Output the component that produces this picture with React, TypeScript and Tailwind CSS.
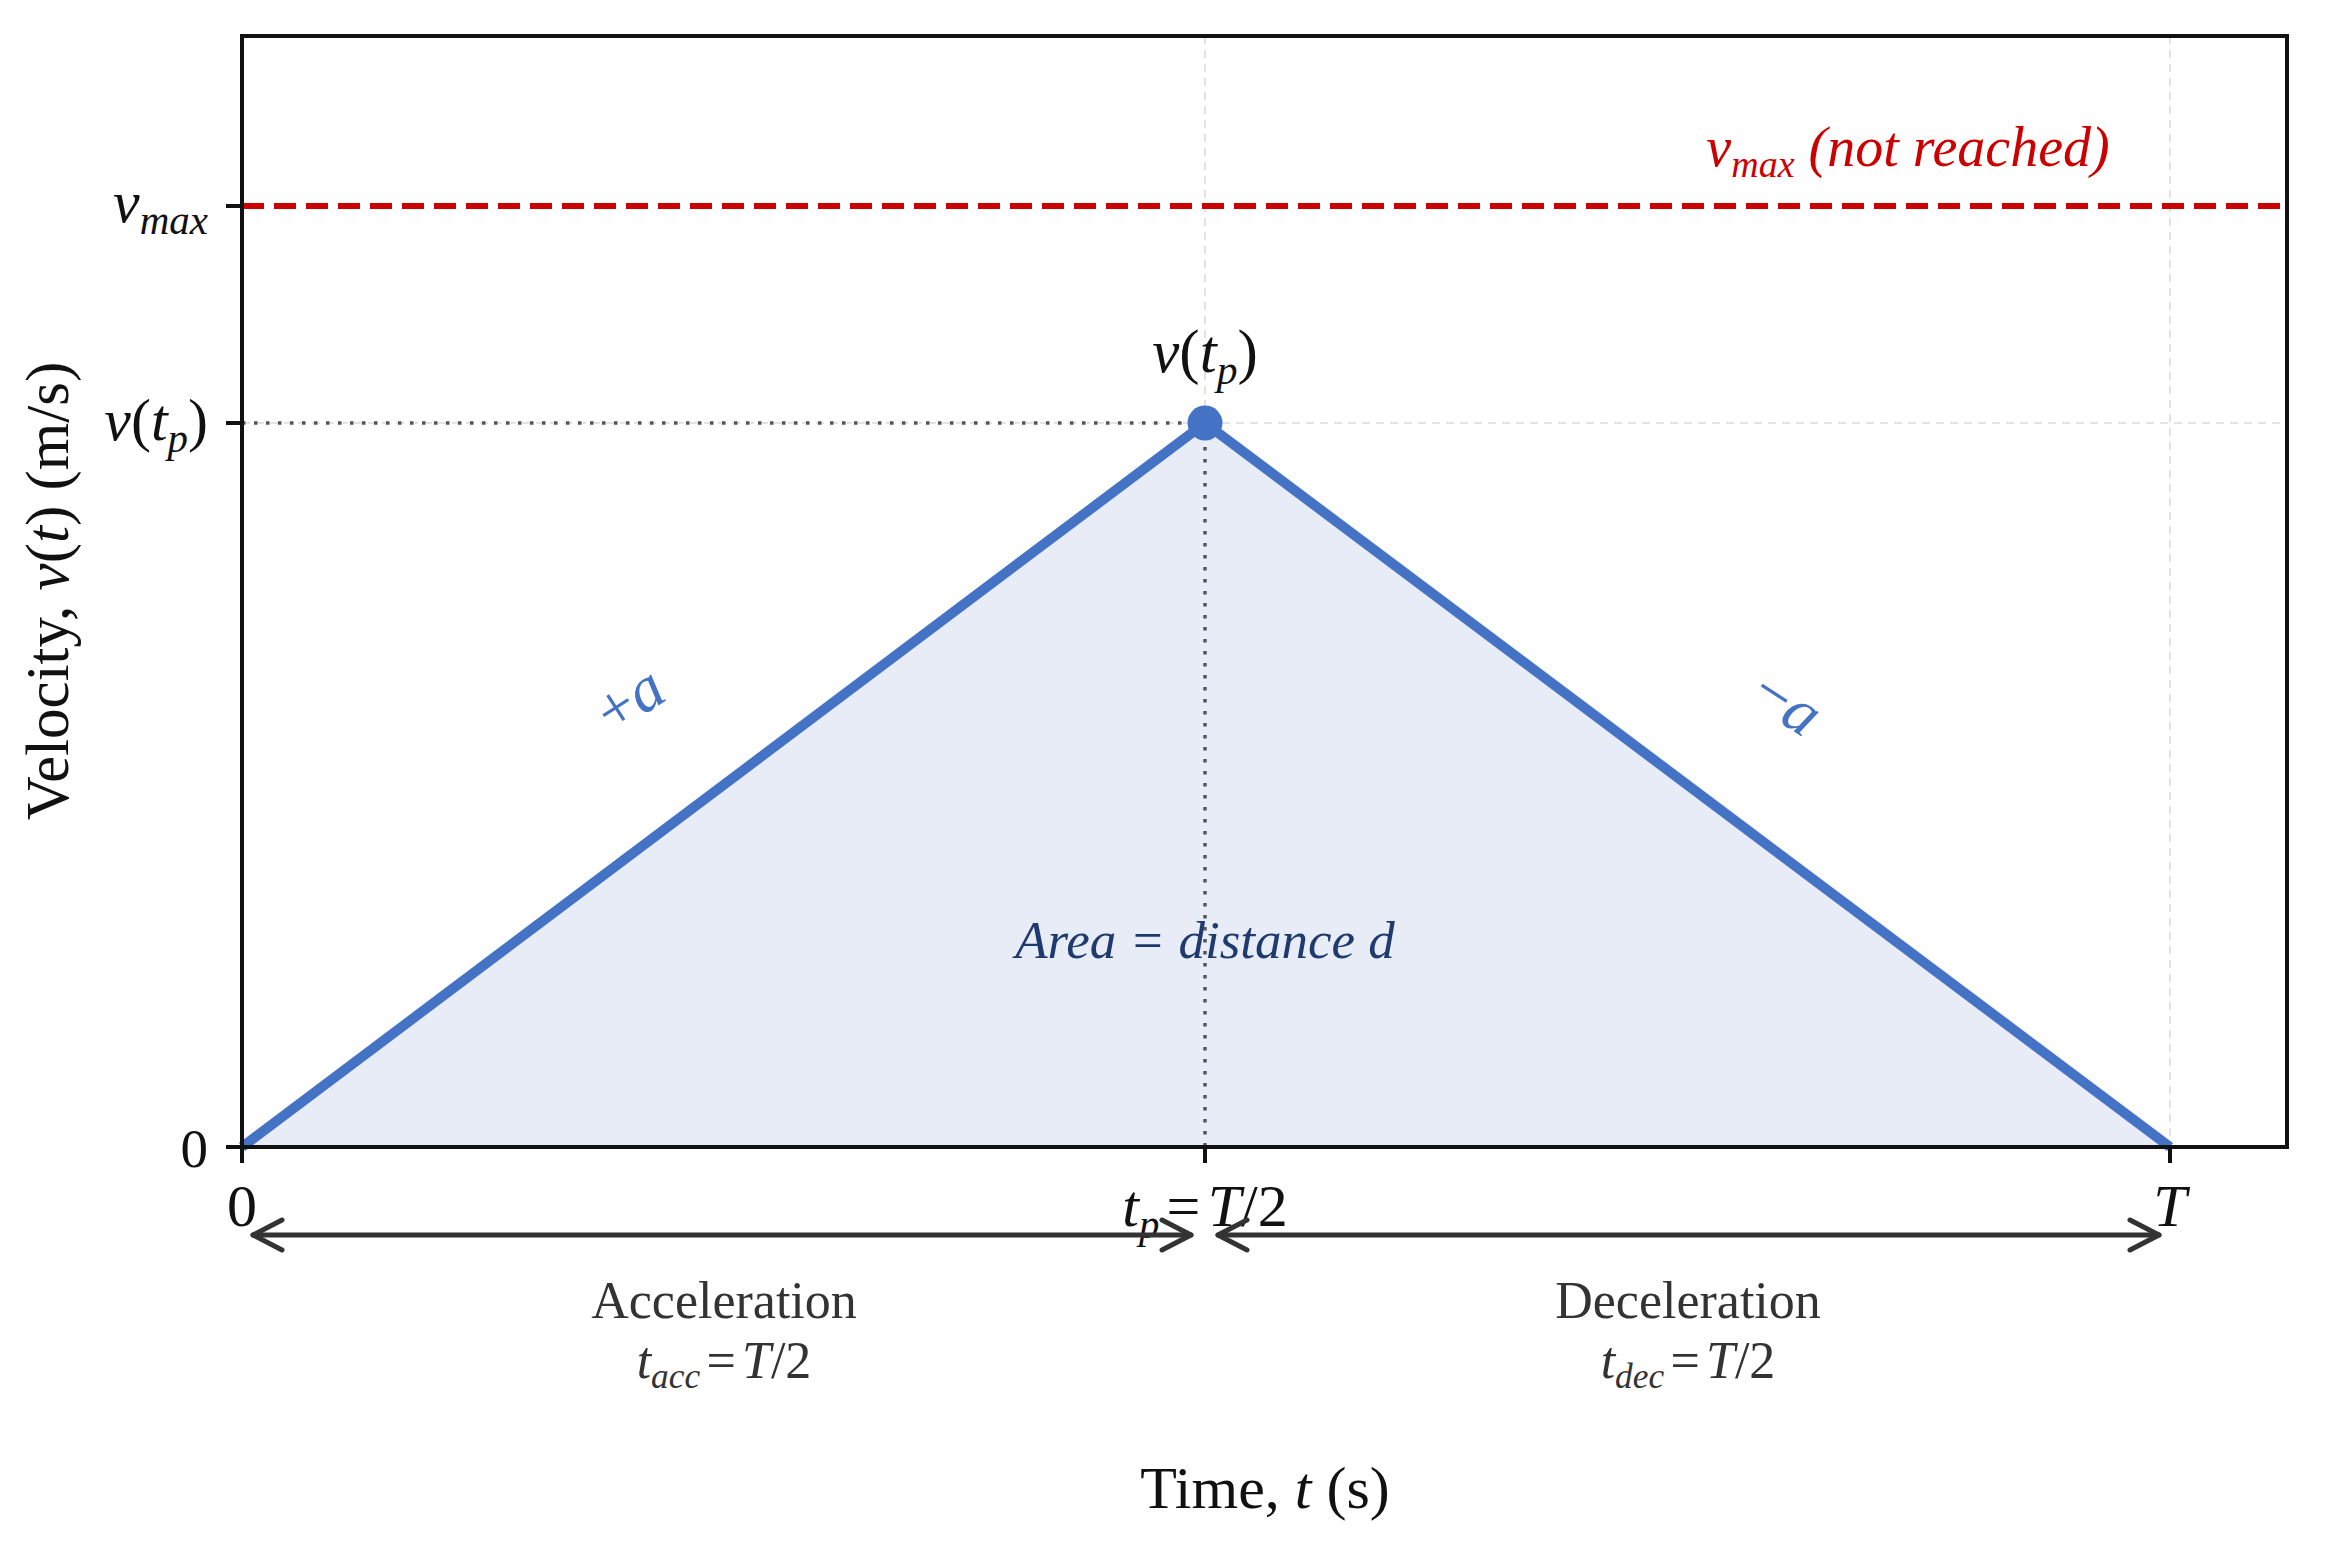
import React from 'react';

const SERIF = "'Liberation Serif', 'DejaVu Serif', serif";

const X0 = 242;
const XP = 1205;
const XT = 2170;
const XR = 2287;
const YT = 36;
const YB = 1147;
const YM = 206;
const YP = 423;

const BLUE = '#4472c4';

const Arrow = ({ x1, x2, y }: { x1: number; x2: number; y: number }) => (
  <g stroke="#333" strokeWidth={5} fill="none" strokeLinecap="round" strokeLinejoin="round">
    <line x1={x1} y1={y} x2={x2} y2={y} />
    <polyline points={`${x1 + 29},${y - 15} ${x1},${y} ${x1 + 29},${y + 15}`} />
    <polyline points={`${x2 - 29},${y - 15} ${x2},${y} ${x2 - 29},${y + 15}`} />
  </g>
);

// v(t_p), used on the tick and above the peak
const VofTp = ({ size }: { size: number }) => (
  <>
    <tspan fontStyle="italic">v</tspan>
    <tspan>(</tspan>
    <tspan fontStyle="italic">t</tspan>
    <tspan fontStyle="italic" fontSize={size * 0.68} dy={size * 0.2}>
      p
    </tspan>
    <tspan dy={-size * 0.2}>)</tspan>
  </>
);

// t_xxx = T/2
const Phase = ({ size, sub }: { size: number; sub: string }) => (
  <>
    <tspan fontStyle="italic">t</tspan>
    <tspan fontStyle="italic" fontSize={size * 0.68} dy={size * 0.2}>
      {sub}
    </tspan>
    <tspan dy={-size * 0.2} dx={size * 0.12}>
      =
    </tspan>
    <tspan dx={size * 0.12} fontStyle="italic">
      T
    </tspan>
    <tspan>/2</tspan>
  </>
);

const Chart = () => (
  <svg width={2327} height={1542} viewBox="0 0 2327 1542" className="block">
    {/* grid */}
    <g stroke="#e3e3e3" strokeWidth={2} strokeDasharray="8 6">
      <line x1={XP} y1={YT} x2={XP} y2={YB} />
      <line x1={XT} y1={YT} x2={XT} y2={YB} />
      <line x1={X0} y1={YP} x2={XR} y2={YP} />
    </g>

    {/* area under curve */}
    <polygon points={`${X0},${YB} ${XP},${YP} ${XT},${YB}`} fill="#e8ecf7" />

    {/* v max */}
    <line x1={X0} y1={YM} x2={XR} y2={YM} stroke="#cc0000" strokeWidth={6} strokeDasharray="22 10" />

    {/* guides to peak */}
    <g stroke="#555" strokeWidth={3.5} strokeDasharray="3.5 8.5">
      <line x1={X0} y1={YP} x2={XP} y2={YP} />
      <line x1={XP} y1={YP} x2={XP} y2={YB} />
    </g>

    {/* profile */}
    <polyline
      points={`${X0},${YB} ${XP},${YP} ${XT},${YB}`}
      fill="none"
      stroke={BLUE}
      strokeWidth={10}
      strokeLinejoin="miter"
    />
    <circle cx={XP} cy={YP} r={17.5} fill={BLUE} />

    {/* spines */}
    <rect x={X0} y={YT} width={XR - X0} height={YB - YT} fill="none" stroke="#111" strokeWidth={4} />

    {/* ticks */}
    <g stroke="#111" strokeWidth={4}>
      <line x1={X0 - 16} y1={YM} x2={X0} y2={YM} />
      <line x1={X0 - 16} y1={YP} x2={X0} y2={YP} />
      <line x1={X0 - 16} y1={YB} x2={X0} y2={YB} />
      <line x1={X0} y1={YB} x2={X0} y2={YB + 16} />
      <line x1={XP} y1={YB} x2={XP} y2={YB + 16} />
      <line x1={XT} y1={YB} x2={XT} y2={YB + 16} />
    </g>

    <g fontFamily={SERIF} fill="#111">
      {/* y tick labels */}
      <text x={X0 - 34} y={YM + 16} fontSize={60} textAnchor="end" fontStyle="italic">
        <tspan>v</tspan>
        <tspan fontSize={41} dy={12}>
          max
        </tspan>
      </text>
      <text x={X0 - 34} y={YP + 17} fontSize={60} textAnchor="end">
        <VofTp size={60} />
      </text>
      <text x={X0 - 34} y={YB + 20} fontSize={55} textAnchor="end">
        0
      </text>

      {/* x tick labels */}
      <text x={X0} y={1226} fontSize={60} textAnchor="middle">
        0
      </text>
      <text x={XP} y={1226} fontSize={60} textAnchor="middle">
        <Phase size={60} sub="p" />
      </text>
      <text x={XT} y={1226} fontSize={60} textAnchor="middle" fontStyle="italic">
        T
      </text>

      {/* peak label */}
      <text x={XP} y={372} fontSize={61} textAnchor="middle">
        <VofTp size={61} />
      </text>

      {/* axis titles */}
      <text x={1265} y={1508} fontSize={60} textAnchor="middle">
        Time, <tspan fontStyle="italic">t</tspan> (s)
      </text>
      <text transform="translate(68 591) rotate(-90)" fontSize={61} textAnchor="middle">
        Velocity, <tspan fontStyle="italic">v</tspan>(<tspan fontStyle="italic">t</tspan>) (m/s)
      </text>
    </g>

    {/* v max note */}
    <text x={1908} y={166} fontFamily={SERIF} fontSize={56} textAnchor="middle" fill="#cc0000" fontStyle="italic">
      <tspan>v</tspan>
      <tspan fontSize={38} dy={11}>
        max
      </tspan>
      <tspan dy={-11}> (not reached)</tspan>
    </text>

    {/* slope labels */}
    <text
      transform="translate(630 700) rotate(-33)"
      fontFamily={SERIF}
      fontSize={64}
      textAnchor="middle"
      dy={20}
      fill={BLUE}
    >
      <tspan>+</tspan>
      <tspan fontStyle="italic">a</tspan>
    </text>
    <text
      transform="translate(1787 703) rotate(33)"
      fontFamily={SERIF}
      fontSize={64}
      textAnchor="middle"
      dy={20}
      fill={BLUE}
    >
      <tspan>−</tspan>
      <tspan fontStyle="italic">a</tspan>
    </text>

    {/* area note */}
    <text x={XP} y={958} fontFamily={SERIF} fontSize={53} textAnchor="middle" fill="#1f3a6e" fontStyle="italic">
      Area = distance d
    </text>

    {/* phase arrows */}
    <Arrow x1={253} x2={1191} y={1235} />
    <Arrow x1={1218} x2={2159} y={1235} />

    <g fontFamily={SERIF} fill="#333" textAnchor="middle">
      <text x={724} y={1318} fontSize={52}>
        Acceleration
      </text>
      <text x={724} y={1378} fontSize={52}>
        <Phase size={52} sub="acc" />
      </text>
      <text x={1688} y={1318} fontSize={52}>
        Deceleration
      </text>
      <text x={1688} y={1378} fontSize={52}>
        <Phase size={52} sub="dec" />
      </text>
    </g>
  </svg>
);

export default function App() {
  return (
    <div className="w-[2327px] h-[1542px] bg-white overflow-hidden">
      <Chart />
    </div>
  );
}
